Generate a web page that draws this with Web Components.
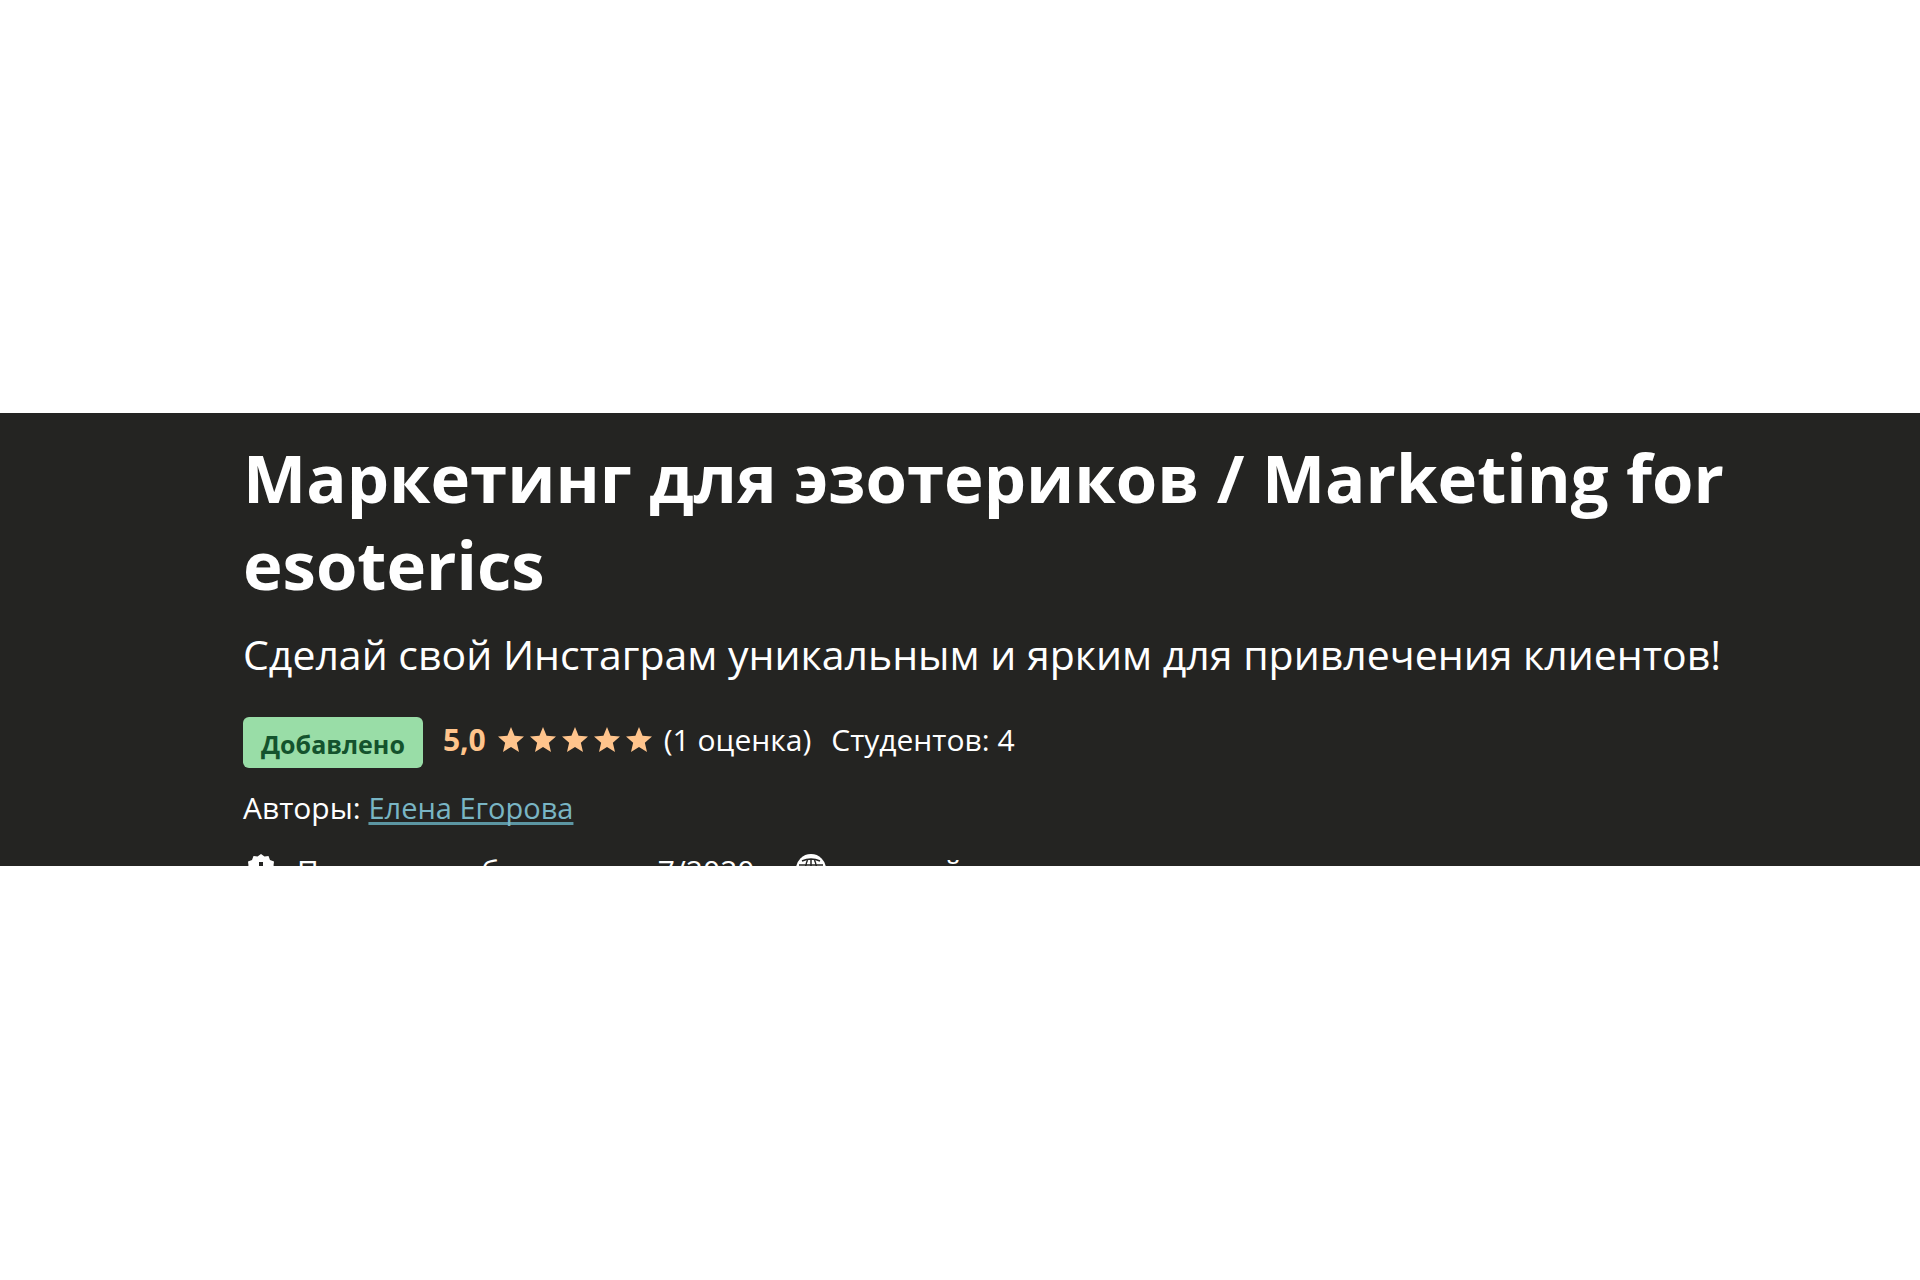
<!DOCTYPE html>
<html lang="ru">
<head>
<meta charset="utf-8">
<title>Маркетинг для эзотериков / Marketing for esoterics</title>
<style>
  body { margin: 0; box-sizing: border-box; min-height: 100vh; padding-bottom: 1px; display: flex; flex-direction: column; justify-content: center; background: #fff; font-family: "Open Sans", "Noto Sans", sans-serif; }
</style>
</head>
<body>
<course-hero>
  <span slot="title">Маркетинг для эзотериков / Marketing for esoterics</span>
  <span slot="lead">Сделай свой Инстаграм уникальным и ярким для привлечения клиентов!</span>
  <course-badge slot="stats">Добавлено</course-badge>
  <star-rating slot="stats" value="5,0" count="5">(1 оценка)</star-rating>
  <span slot="stats">Студентов: 4</span>
  <author-link slot="authors" href="#author">Елена Егорова</author-link>
  <meta-item slot="meta" icon="badge">Последнее обновление: 7/2020</meta-item>
  <meta-item slot="meta" icon="globe">русский</meta-item>
</course-hero>
<script>
class CourseHero extends HTMLElement {
  constructor() {
    super();
    this.attachShadow({ mode: "open" }).innerHTML = `
      <style>
        :host { display: block; background: #242422; color: #fff; }
        section { display: flex; flex-direction: column; padding: 21px 160px 0 243px; font-size: 30px; line-height: 40px; }
        h1 { margin: 0; font-size: 67px; line-height: 87px; font-weight: 700; }
        .lead { margin: 18px 0 0; font-size: 41px; line-height: 56px; }
        .stats { display: flex; align-items: flex-start; gap: 20px; margin-top: 35px; line-height: 46px; }
        .authors { margin-top: 20px; }
        .meta { display: flex; gap: 38px; margin-top: 21px; height: 17px; line-height: 44px; overflow: hidden; }
      </style>
      <section>
        <h1><slot name="title"></slot></h1>
        <p class="lead"><slot name="lead"></slot></p>
        <div class="stats"><slot name="stats"></slot></div>
        <div class="authors">Авторы: <slot name="authors"></slot></div>
        <div class="meta"><slot name="meta"></slot></div>
      </section>`;
  }
}
class CourseBadge extends HTMLElement {
  constructor() {
    super();
    this.attachShadow({ mode: "open" }).innerHTML = `
      <style>
        :host { display: block; box-sizing: border-box; padding: 7px 18px 4px; border-radius: 6px; background: #99dda7; color: #14532d; font-size: 25px; line-height: 40px; font-weight: 700; }
      </style><slot></slot>`;
  }
}
class StarRating extends HTMLElement {
  constructor() {
    super();
    const star = `<svg viewBox="0 0 24 24" aria-hidden="true"><path d="M12 0l3.300 8.100 8.700.7-6.600 5.700 2 8.500L12 18.400 4.600 23l2-8.500L0 8.800l8.700-.7z"/></svg>`;
    this.attachShadow({ mode: "open" }).innerHTML = `
      <style>
        :host { display: flex; align-items: center; gap: 12px; }
        b { color: #ffc48c; }
        .stars { display: flex; gap: 6px; }
        svg { width: 26px; height: 26px; fill: #ffc48c; }
      </style>
      <b>${this.getAttribute("value")}</b>
      <span class="stars">${star.repeat(Number(this.getAttribute("count")))}</span>
      <span><slot></slot></span>`;
  }
}
class AuthorLink extends HTMLElement {
  constructor() {
    super();
    this.attachShadow({ mode: "open" }).innerHTML = `
      <style>
        :host { display: inline; font-size: 29px; }
        a { color: #79b5c4; text-decoration: underline; text-decoration-thickness: 3px; text-underline-offset: 3px; text-decoration-color: #5c96a3; text-decoration-skip-ink: none; }
      </style>
      <a href="${this.getAttribute("href")}"><slot></slot></a>`;
  }
}
class MetaItem extends HTMLElement {
  constructor() {
    super();
    const icons = {
      badge: `<path fill="#fff" fill-rule="evenodd" d="M16 1l3.500 2.500 4-.5 1.500 4 4 1.500-.5 4L31 16l-2.500 3.500.5 4-4 1.500-1.500 4-4-.5L16 31l-3.500-2.500-4 .5L7 25l-4-1.500.5-4L1 16l2.500-3.500-.5-4L7 7l1.500-4 4 .5zM14 9h4v9h-4zM14 20h4v4h-4z"/>`,
      globe: `<circle cx="16" cy="16" r="15" fill="#fff"/><path d="M4 12h24M4 20h24M16 6v22M13 6q-5 10 0 20M19 6q5 10 0 20M7 8q9-4 18 0" fill="none" stroke="#242422" stroke-width="1.500"/>`
    };
    this.attachShadow({ mode: "open" }).innerHTML = `
      <style>
        :host { display: flex; align-items: flex-start; gap: 18px; white-space: nowrap; }
        svg { width: 36px; height: 32px; margin-top: 4px; }
      </style>
      <svg viewBox="-2 0 36 32" aria-hidden="true">${icons[this.getAttribute("icon")]}</svg>
      <span><slot></slot></span>`;
  }
}
customElements.define("course-hero", CourseHero);
customElements.define("course-badge", CourseBadge);
customElements.define("star-rating", StarRating);
customElements.define("author-link", AuthorLink);
customElements.define("meta-item", MetaItem);
</script>
</body>
</html>
